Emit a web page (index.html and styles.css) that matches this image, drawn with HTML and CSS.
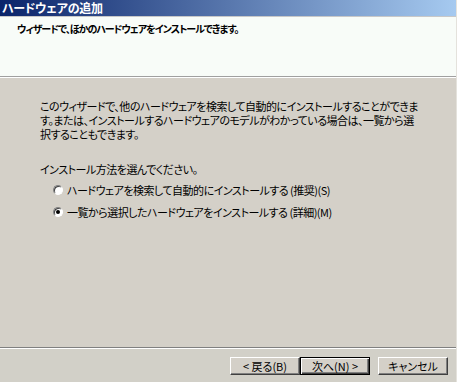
FILE: index.html
```html
<!DOCTYPE html>
<html lang="ja">
<head>
  <meta charset="UTF-8" />
  <title>ハードウェアの追加</title>
  <link rel="stylesheet" href="styles.css">
</head>
<body>

  <div class="window">
    <!-- Title bar -->
    <div class="titlebar">ハードウェアの追加</div>

    <!-- Wizard header -->
    <div class="header">
      <p class="header-text">ウィザードで、ほかのハードウェアをインストールできます。</p>
    </div>

    <!-- Wizard body -->
    <div class="content">
      <p class="intro">
        このウィザードで、他のハードウェアを検索して自動的にインストールすることができま<br>
        す。または、インストールするハードウェアのモデルがわかっている場合は、一覧から選<br>
        択することもできます。
      </p>

      <p class="question">インストール方法を選んでください。</p>

      <div class="options">
        <label class="option">
          <span class="radio"></span>
          ハードウェアを検索して自動的にインストールする (推奨)(S)
        </label>
        <label class="option">
          <span class="radio checked"></span>
          一覧から選択したハードウェアをインストールする (詳細)(M)
        </label>
      </div>
    </div>

    <div class="separator"></div>

    <div class="buttons">
      <button class="btn">&lt; 戻る(B)</button>
      <button class="btn default">次へ(N) &gt;</button>
      <button class="btn cancel">キャンセル</button>
    </div>
  </div>

</body>
</html>
```

FILE: styles.css
```css
/* Base */
* {
  margin: 0;
  padding: 0;
  box-sizing: border-box;
}

body {
  background-color: #ffffff;
  font-family: "Noto Sans CJK JP", "Liberation Sans", sans-serif;
  font-size: 11px;
  font-feature-settings: "palt";
  letter-spacing: -0.5px;
  color: #000000;
}

/* Window */
.window {
  width: 457px;
  height: 382px;
  display: flex;
  flex-direction: column;
  background-color: #d4d0c8;
  border-right: 1px solid #e4e2dc;
}

.titlebar {
  height: 17px;
  padding: 0 2px;
  background: linear-gradient(to right, #0a246a, #a6caf0);
  border-bottom: 1px solid #c8c8c8;
  color: #ffffff;
  font-size: 12px;
  font-weight: bold;
  letter-spacing: -0.2px;
  line-height: 15px;
  white-space: nowrap;
}

/* Header */
.header {
  height: 60px;
  padding: 5px 17px;
  background-color: #f8fcf8;
  border-bottom: 1px solid #a0a0a0;
  box-shadow: 0 1px 0 #ffffff;
}

.header-text {
  font-size: 10px;
  font-weight: bold;
  letter-spacing: -1px;
  line-height: 14px;
  white-space: nowrap;
}

/* Body */
.content {
  flex: 1;
  padding: 22px 0 0 40px;
  line-height: 14px;
  white-space: nowrap;
}

.intro {
  margin-bottom: 21px;
}

.question {
  margin-bottom: 7px;
}

.options {
  display: flex;
  flex-direction: column;
  gap: 8px;
  padding-left: 13px;
}

.option {
  display: flex;
  align-items: center;
  gap: 4px;
  height: 14px;
}

.radio {
  width: 10px;
  height: 10px;
  border-radius: 50%;
  background-color: #ffffff;
  border: 1px solid;
  border-color: #808080 #ffffff #ffffff #808080;
  box-shadow: inset 1px 1px 0 #404040;
  position: relative;
}

.radio.checked::after {
  content: "";
  position: absolute;
  top: 2px;
  left: 2px;
  width: 4px;
  height: 4px;
  border-radius: 50%;
  background-color: #000000;
}

/* Footer */
.separator {
  border-top: 1px solid #808080;
  border-bottom: 1px solid #ffffff;
}

.buttons {
  display: flex;
  justify-content: flex-end;
  padding: 8px 8px 7px;
  background-color: #d2d0c8;
}

.btn {
  width: 70px;
  height: 18px;
  font-family: "Noto Sans CJK JP", "Liberation Sans", sans-serif;
  font-size: 11px;
  font-feature-settings: "palt";
  line-height: 14px;
  background-color: #d4d0c8;
  border: 1px solid;
  border-color: #ffffff #404040 #404040 #ffffff;
  box-shadow: inset -1px -1px 0 #808080;
  color: #000000;
}

.btn.default {
  border: 1px solid #000000;
  box-shadow: inset 1px 1px 0 #ffffff, inset -1px -1px 0 #404040, inset -2px -2px 0 #808080;
}

.btn.cancel {
  margin-left: 8px;
}
```
